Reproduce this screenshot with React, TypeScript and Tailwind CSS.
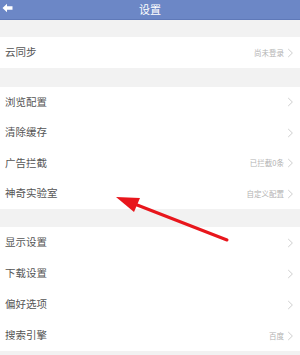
import React from "react";

const font = { fontFamily: '"Noto Sans CJK SC", "Noto Sans", sans-serif' };

function Chevron() {
  return (
    <svg width="7" height="10" viewBox="0 0 7 10" className="ml-[3px]">
      <path d="M1.2 1 L5.4 5 L1.2 9" fill="none" stroke="#c8c8c8" strokeWidth="0.9" />
    </svg>
  );
}

function Row({ label, value, h }: { label: string; value?: string; h: string }) {
  return (
    <div className={`flex items-center justify-between bg-white pl-[5px] pr-[6px] ${h}`}>
      <span className="text-[10.5px] text-[#555555] leading-none">{label}</span>
      <div className="flex items-center">
        {value && <span className="text-[7.5px] text-[#b3b3b3] leading-none">{value}</span>}
        <Chevron />
      </div>
    </div>
  );
}

function Band({ h }: { h: string }) {
  return <div className={`bg-[#f2f2f2] ${h}`} />;
}

export default function App() {
  return (
    <div className="relative w-[300px] h-[355px] overflow-hidden bg-[#f2f2f2]" style={font}>
      <div className="flex h-[20px] items-center justify-center relative bg-[#6c87c6] border-b border-[#5f79b8]">
        <svg className="absolute left-[2px] top-[3px]" width="11" height="10" viewBox="0 0 11 10">
          <path d="M0.5 5 L5 0.8 L5 3.3 L10.5 3.3 L10.5 6.7 L5 6.7 L5 9.2 Z" fill="#ffffff" />
        </svg>
        <span className="text-[11px] text-white leading-none">设置</span>
      </div>
      <Band h="h-[17px]" />
      <Row label="云同步" value="尚未登录" h="h-[31px]" />
      <Band h="h-[19px]" />
      <Row label="浏览配置" h="h-[30px]" />
      <Row label="清除缓存" h="h-[31px]" />
      <Row label="广告拦截" value="已拦截0条" h="h-[30px]" />
      <Row label="神奇实验室" value="自定义配置" h="h-[31px]" />
      <Band h="h-[18px]" />
      <Row label="显示设置" h="h-[31px]" />
      <Row label="下载设置" h="h-[31px]" />
      <Row label="偏好选项" h="h-[31px]" />
      <Row label="搜索引擎" value="百度" h="h-[31px]" />
      <svg className="absolute left-0 top-0 pointer-events-none" width="300" height="355" viewBox="0 0 300 355">
        <line x1="132" y1="203" x2="227" y2="240" stroke="#e8161c" strokeWidth="3" strokeLinecap="round" />
        <polygon points="116,197 140,198 134,212" fill="#e8161c" />
      </svg>
    </div>
  );
}
